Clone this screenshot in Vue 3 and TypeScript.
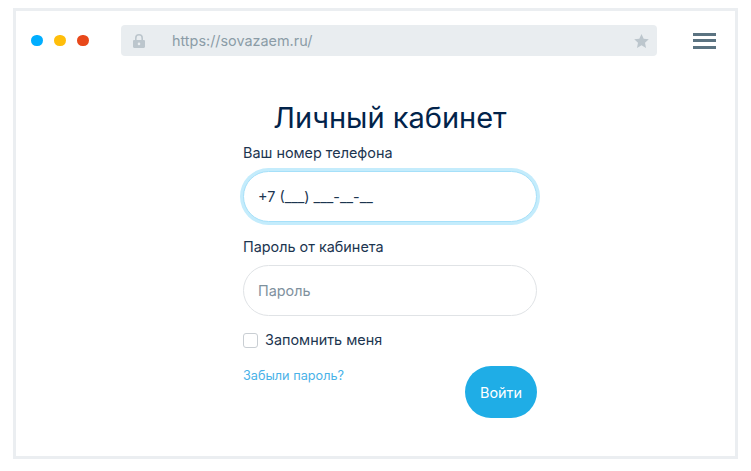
<script setup lang="ts">
const url: string = 'https://sovazaem.ru/'
</script>

<template>
  <div class="frame">
    <header class="bar">
      <div class="dots">
        <span class="dot blue"></span>
        <span class="dot yellow"></span>
        <span class="dot red"></span>
      </div>
      <div class="address">
        <svg class="lock" width="12" height="14" viewBox="0 0 12 14">
          <path fill="#bcc6cd" d="M1.2 6h.8V4a4 4 0 0 1 8 0v2h.8c.66 0 1.2.54 1.2 1.2v5.6c0 .66-.54 1.2-1.2 1.2H1.2C.54 14 0 13.46 0 12.8V7.200C0 6.540.54 6 1.200 6zM3.600 6h4.800V4a2.400 2.400 0 0 0-4.800 0v2zM6 8.600a1.300 1.300 0 1 0 0 2.600 1.300 1.300 0 0 0 0-2.600z" fill-rule="evenodd"/>
        </svg>
        <span class="url">{{ url }}</span>
        <svg class="star" width="15" height="14" viewBox="0 0 15 14">
          <path fill="#bcc6cd" d="M7.500 0l2.200 4.700 5.100.6-3.800 3.500 1 5.100-4.500-2.600L3 13.900l1-5.100L.2 5.300l5.100-.6z"/>
        </svg>
      </div>
      <div class="menu">
        <span></span><span></span><span></span>
      </div>
    </header>
    <main class="content">
      <h1 class="title">Личный кабинет</h1>
      <form class="form" @submit.prevent>
        <label class="label">Ваш номер телефона</label>
        <div class="input focused">+7 (___) ___-__-__</div>
        <label class="label second">Пароль от кабинета</label>
        <div class="input placeholder">Пароль</div>
        <label class="remember">
          <span class="check"></span>
          <span>Запомнить меня</span>
        </label>
        <div class="actions">
          <a class="forgot">Забыли пароль?</a>
          <button class="submit" type="button">Войти</button>
        </div>
      </form>
    </main>
  </div>
</template>

<style scoped>
.frame {
  box-sizing: border-box;
  width: 725px;
  height: 451px;
  margin: 8px 0 0 13px;
  border: 3px solid #ebeef1;
  background: #fff;
  font-family: Inter, "Noto Sans", sans-serif;
}
.bar {
  display: flex;
  align-items: center;
  padding: 14px 0 0 15px;
  height: 31px;
}
.dots {
  display: flex;
  gap: 11.500px;
  width: 90px;
  flex: none;
}
.dot {
  width: 11.500px;
  height: 11.500px;
  border-radius: 50%;
}
.blue { background: #00aeff; }
.yellow { background: #ffbe0a; }
.red { background: #e8481a; }
.address {
  display: flex;
  align-items: center;
  flex: none;
  width: 536px;
  height: 31px;
  border-radius: 4px;
  background: #e9edf0;
  padding: 0 8px 0 12px;
  box-sizing: border-box;
}
.lock { flex: none; }
.url {
  margin-left: 27px;
  font-size: 14.400px;
  color: #8b9ca7;
  flex: 1;
}
.star { flex: none; }
.menu {
  margin-left: 36px;
  width: 23px;
  flex: none;
  display: flex;
  flex-direction: column;
  gap: 3.500px;
}
.menu span {
  display: block;
  height: 3px;
  background: #5b7381;
}
.content {
  display: flex;
  flex-direction: column;
  align-items: center;
  padding-left: 29px;
}
.title {
  margin: 45px 0 0;
  font-size: 29px;
  line-height: 34px;
  font-weight: 400;
  color: #02234a;
}
.form {
  width: 294px;
  display: flex;
  flex-direction: column;
}
.label {
  font-size: 14.400px;
  line-height: 18px;
  color: #1c3550;
  margin-top: 9px;
}
.label.second {
  margin-top: 16px;
}
.input {
  box-sizing: border-box;
  height: 51px;
  margin-top: 9px;
  border: 1px solid #e0e3e6;
  border-radius: 26px;
  padding: 0 14px;
  display: flex;
  align-items: center;
  font-size: 14.400px;
  color: #1c3550;
  background: #fff;
}
.input.focused {
  border-color: #a6e0f9;
  box-shadow: 0 0 0 3px #c4ecfc;
}
.input.placeholder {
  color: #7f919e;
}
.remember {
  display: flex;
  align-items: center;
  gap: 7px;
  margin-top: 15px;
  font-size: 14.400px;
  line-height: 18px;
  color: #1c3550;
}
.check {
  box-sizing: border-box;
  width: 15px;
  height: 15px;
  border: 1px solid #c9ced3;
  border-radius: 3px;
  background: #fff;
}
.actions {
  display: flex;
  justify-content: space-between;
  align-items: flex-start;
  margin-top: 17px;
}
.forgot {
  font-size: 12.700px;
  line-height: 16px;
  color: #4ab2e8;
  margin-top: 2px;
}
.submit {
  width: 72px;
  height: 52px;
  border: none;
  border-radius: 26px;
  background: #1fade6;
  color: #fff;
  font-family: inherit;
  font-size: 14.400px;
  padding: 0;
}
</style>

<style>
html, body { margin: 0; background: #fff; }
</style>
